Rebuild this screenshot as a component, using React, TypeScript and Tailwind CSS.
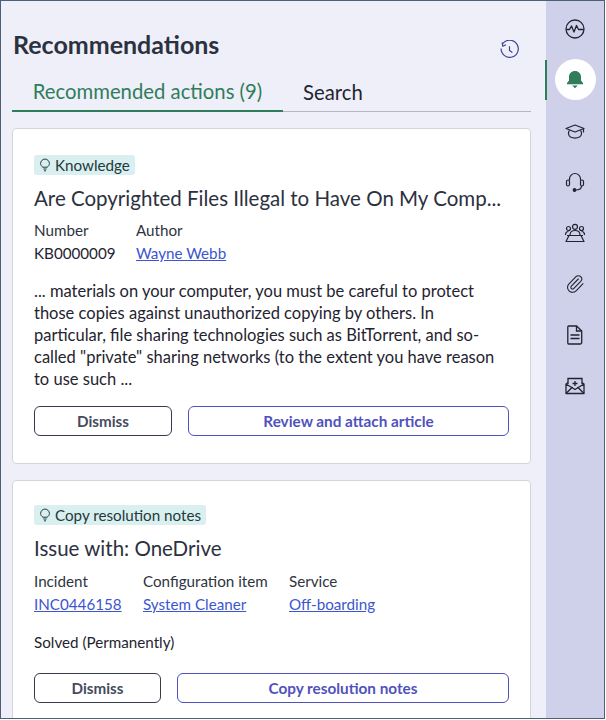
import { Paperclip } from "lucide-react";

function Bulb() {
  return (
    <svg width="12" height="14" viewBox="0 0 12 14" fill="none" stroke="#24393a" strokeWidth="1" className="shrink-0">
      <path d="M3.8 9.2C2.6 8.3 1.6 7.100 1.6 5.500a4.400 4.400 0 0 1 8.800 0c0 1.600-1 2.800-2.200 3.700z" />
      <path d="M4.400 11h3.200M5 12.800h2" />
    </svg>
  );
}

function Badge({ label }: { label: string }) {
  return (
    <div className="inline-flex h-5 items-center gap-[4px] self-start rounded-[3px] bg-[#d9eff0] pl-[5px] pr-[5px] text-[15.2px] leading-5 text-[#24393a]">
      <Bulb />
      {label}
    </div>
  );
}

function Field({ label, value, link, width }: { label: string; value: string; link?: boolean; width: string }) {
  return (
    <div className={`${width} shrink-0 text-[15.2px] leading-[23px]`}>
      <div className="text-[#2e3440]">{label}</div>
      {link ? <a className="text-[#3c55d0] underline">{value}</a> : <div className="text-[#1f2430]">{value}</div>}
    </div>
  );
}

function Actions({ primary, dismissWidth }: { primary: string; dismissWidth: string }) {
  return (
    <div className="flex gap-4">
      <button className={`${dismissWidth} h-[30px] shrink-0 rounded-md border border-[#363c4c] bg-white text-[15.2px] font-bold text-[#454b5c]`}>
        Dismiss
      </button>
      <button className="h-[30px] grow rounded-md border border-[#4f52bd] bg-white text-[15.3px] font-bold text-[#4f52bd]">
        {primary}
      </button>
    </div>
  );
}

function Rail() {
  const cls = "flex h-[51px] items-center justify-center text-[#1f2430]";
  return (
    <aside className="flex w-[58px] shrink-0 flex-col bg-[#cfd0ea] pt-[2px]">
      <div className={cls}>
        <svg width="20" height="20" viewBox="0 0 20 20" fill="none" stroke="currentColor" strokeWidth="1.300">
          <circle cx="10" cy="10" r="9" />
          <path d="M1.500 10.500h3l2-3.500 2.500 6 2.500-6.500 2 4h5" strokeLinejoin="round" />
        </svg>
      </div>
      <div className="relative flex h-[51px] items-center justify-center">
        <div className="absolute left-[-1px] top-[6px] h-10 w-[2px] bg-[#2f7d5b]" />
        <div className="flex size-[41px] items-center justify-center rounded-full bg-white">
          <svg width="18" height="19" viewBox="0 0 18 19" fill="#2f7d5b">
            <path d="M9 1C5.500 1 3 3.500 3 7v3.500L1 13v1.300h16V13l-2-2.500V7c0-3.500-2.500-6-6-6z" />
            <path d="M6.200 15.500h5.600L9 18.200z" />
          </svg>
        </div>
      </div>
      <div className={cls}>
        <svg width="20" height="16" viewBox="0 0 20 16" fill="none" stroke="currentColor" strokeWidth="1.200">
          <path d="M1 5.500 10 2l9 3.500-9 3.500z" strokeLinejoin="round" />
          <path d="M4.500 7.500c-1.500 1.500-1.500 5 1 6.500 2.500 1.200 6.500 1.200 9 0 2.500-1.500 2.500-5 1-6.500" />
          <path d="M18.500 6v3.500" />
        </svg>
      </div>
      <div className={cls}>
        <svg width="20" height="20" viewBox="0 0 20 20" fill="none" stroke="currentColor" strokeWidth="1.200">
          <path d="M4.500 8.500V7a5.500 5.500 0 0 1 11 0v1.500" />
          <rect x="1.500" y="8" width="3" height="6" rx="1.500" />
          <rect x="15.500" y="8" width="3" height="6" rx="1.500" />
          <path d="M16.500 14c0 2.500-2.500 4-6 4" />
          <circle cx="9.500" cy="18" r="1.300" fill="currentColor" />
        </svg>
      </div>
      <div className={cls}>
        <svg width="22" height="20" viewBox="0 0 22 20" fill="none" stroke="currentColor" strokeWidth="1.200">
          <circle cx="11" cy="3.800" r="2.500" />
          <circle cx="4.500" cy="5.500" r="2" />
          <circle cx="17.500" cy="5.500" r="2" />
          <path d="M6 12c0-3 2-4.500 5-4.500s5 1.500 5 4.500M1.500 12c0-2 1-3.500 3-3.500M20.500 12c0-2-1-3.500-3-3.500" />
          <path d="M3 12.500h16M5 12.500 2 18.500h18l-3-6" strokeLinejoin="round" />
        </svg>
      </div>
      <div className={cls}>
        <Paperclip size={20} strokeWidth={1.300} />
      </div>
      <div className={cls}>
        <svg width="16" height="20" viewBox="0 0 16 20" fill="none" stroke="currentColor" strokeWidth="1.300">
          <path d="M1.700 1h8l5 5v11.500a1.500 1.500 0 0 1-1.500 1.500H1.700A1 1 0 0 1 .8 18V2a1 1 0 0 1 .9-1z" strokeLinejoin="round" />
          <path d="M9.500 1v5h5" />
          <path d="M3.500 10h9M3.500 13.500h9" strokeWidth="1.600" />
        </svg>
      </div>
      <div className={cls}>
        <svg width="20" height="18" viewBox="0 0 20 18" fill="none" stroke="currentColor" strokeWidth="1.300">
          <path d="M3 7V1.500h14V7" />
          <path d="M1 7 3 5.500M19 7l-2-1.500M1 7v9.500h18V7L10 12.500z" strokeLinejoin="round" />
          <path d="m1 16.500 6.500-6.500M19 16.500 12.500 10" />
          <path d="M10 4v5M7.500 6.500h5" />
        </svg>
      </div>
    </aside>
  );
}

export default function App() {
  return (
    <div className="h-[720px] w-[606px] overflow-hidden bg-white font-['Lato',sans-serif]">
      <div className="flex h-[719px] w-[605px] overflow-hidden border border-[#4d6075] bg-[#eeeff8]">
        <main className="flex min-w-0 grow flex-col overflow-hidden pl-[11px] pr-[15px]">
          <header className="flex h-[60px] shrink-0 items-end justify-between">
            <h1 className="mb-[1px] ml-[1px] text-[25px] leading-8 font-bold text-[#2c3140]">Recommendations</h1>
            <svg width="21" height="21" viewBox="0 0 22 22" fill="none" stroke="#3b3f96" strokeWidth="1.200" className="mr-[11px]">
              <path d="M4 3.800A9 9 0 1 1 2.200 9" />
              <path d="M3.200 2.500 4 6.500l3.300-1.500" />
              <path d="M11 6.500V11l3 2" />
            </svg>
          </header>
          <nav className="flex h-[51px] shrink-0 border-b border-[#b4b6c2] text-[20.3px]">
            <div className="mb-[-1px] flex w-[271px] items-center justify-center border-b-2 border-[#2f7d5b] pt-3 text-[#2f7d5b]">
              Recommended actions (9)
            </div>
            <div className="flex items-center pl-5 pt-3 text-[#1f2430]">Search</div>
          </nav>
          <section className="mt-[16px] flex h-[336px] shrink-0 flex-col rounded-[4px] border border-[#d3d4de] bg-white px-[21px] pt-[26px]">
            <Badge label="Knowledge" />
            <h2 className="mt-[9px] text-[20.5px] leading-7 whitespace-nowrap text-[#2c3140]">
              Are Copyrighted Files Illegal to Have On My Comp...
            </h2>
            <div className="mt-[7px] flex">
              <Field label="Number" value="KB0000009" width="w-[102px]" />
              <Field label="Author" value="Wayne Webb" link width="w-[120px]" />
            </div>
            <p className="mt-[15px] text-[16.5px] leading-[22px] text-[#1f2430]">
              ... materials on your computer, you must be careful to protect those copies against unauthorized copying by others. In particular, file sharing technologies such as BitTorrent, and so-called "private" sharing networks (to the extent you have reason to use such ...
            </p>
            <div className="mt-[16px]">
              <Actions primary="Review and attach article" dismissWidth="w-[138px]" />
            </div>
          </section>
          <section className="mt-[16px] flex h-[300px] shrink-0 flex-col rounded-[4px] border border-[#d3d4de] bg-white px-[21px] pt-[24px]">
            <Badge label="Copy resolution notes" />
            <h2 className="mt-[9px] text-[20.5px] leading-7 text-[#2c3140]">Issue with: OneDrive</h2>
            <div className="mt-[8px] flex">
              <Field label="Incident" value="INC0446158" link width="w-[109px]" />
              <Field label="Configuration item" value="System Cleaner" link width="w-[146px]" />
              <Field label="Service" value="Off-boarding" link width="w-[120px]" />
            </div>
            <p className="mt-[15px] text-[15.2px] leading-[22px] text-[#1f2430]">Solved (Permanently)</p>
            <div className="mt-[20px]">
              <Actions primary="Copy resolution notes" dismissWidth="w-[127px]" />
            </div>
          </section>
        </main>
        <Rail />
      </div>
    </div>
  );
}
